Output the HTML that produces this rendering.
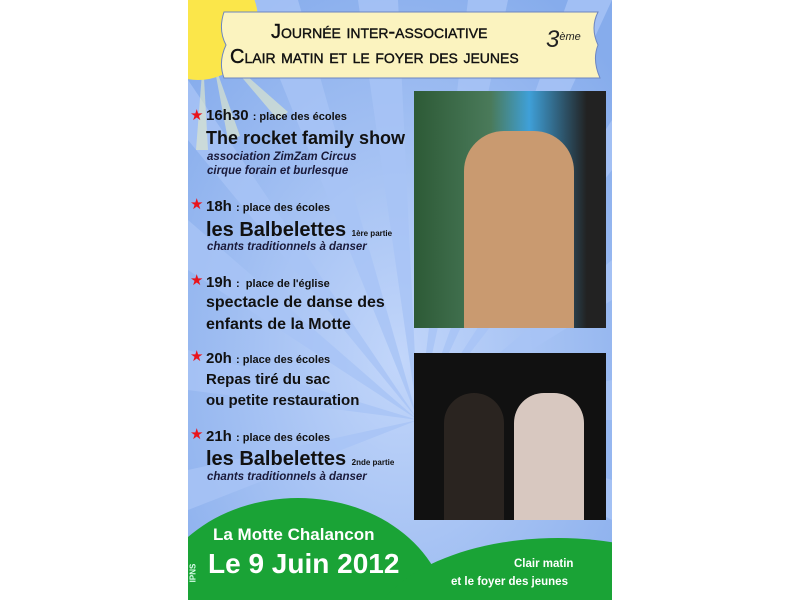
<!DOCTYPE html>
<html><head><meta charset="utf-8"><style>
body{margin:0;width:800px;height:600px;background:#fff;position:relative;overflow:hidden;font-family:"Liberation Sans",sans-serif}
#p{position:absolute;left:188px;top:0;width:424px;height:600px;overflow:hidden;background:#8db2ee}
.t{position:absolute;color:#111;font-weight:bold;white-space:nowrap}
.s{font-size:11px}
.i{font-style:italic;font-size:11.5px;color:#1a1a3a}
.star{position:absolute;color:#e8141c;font-size:15px;left:2px;line-height:18px}
.w{position:absolute;color:#fff;font-weight:bold;white-space:nowrap}
.h{position:absolute;color:#111;white-space:nowrap;font-variant:small-caps;font-size:20px;line-height:22px;-webkit-text-stroke:0.4px #111}
</style></head><body>
<div id="p">
<svg width="424" height="600" style="position:absolute;left:0;top:0">
<defs><radialGradient id="g" cx="0.5" cy="0.6" r="0.7"><stop offset="0" stop-color="#c2d6fa"/><stop offset="1" stop-color="#86acec"/></radialGradient></defs>
<rect width="424" height="600" fill="url(#g)"/>
<g fill="#a8c4f6" opacity="0.8">
<polygon points="230,420 0,80 0,140"/><polygon points="230,420 0,220 0,270"/><polygon points="230,420 0,350 0,390"/><polygon points="230,420 0,470 0,510"/>
<polygon points="230,420 60,0 110,0"/><polygon points="230,420 170,0 210,0"/><polygon points="230,420 280,0 320,0"/><polygon points="230,420 380,0 424,0"/>
<polygon points="230,420 424,120 424,170"/><polygon points="230,420 424,260 424,300"/><polygon points="230,420 424,380 424,420"/><polygon points="230,420 424,480 424,520"/>
</g>
<g fill="#e6ecc8" opacity="0.6"><polygon points="15,60 8,150 20,150"/><polygon points="25,60 40,140 52,136"/><polygon points="35,55 90,120 100,112"/></g>
<circle cx="10" cy="20" r="60" fill="#fbe64a"/>
<path d="M36,12 Q30,30 38,45 Q30,62 36,78 L412,78 Q404,60 410,45 Q402,28 410,12 Z" fill="#fbf3bf" stroke="#6d86c0" stroke-width="1"/>
<ellipse cx="110" cy="620" rx="150" ry="122" fill="#1aa336"/>
<ellipse cx="370" cy="640" rx="190" ry="102" fill="#1aa336"/>
</svg>
<div class="h" style="left:83px;top:21px">Journée inter-associative</div>
<div class="h" style="left:42px;top:46px">Clair matin et le foyer des jeunes</div>
<div class="t" style="left:358px;top:26px;font-size:24px;font-style:italic;font-weight:normal;color:#222">3<span style="font-size:11px;position:relative;top:-7px">ème</span></div>
<div style="position:absolute;left:226px;top:91px;width:192px;height:237px;background:linear-gradient(90deg,#2d5a36 0,#4a7a5a 40%,#3fa0d8 60%,#222 90%)"><div style="position:absolute;left:50px;top:40px;width:110px;height:197px;background:#c99a70;border-radius:40px 40px 0 0"></div></div>
<div style="position:absolute;left:226px;top:353px;width:192px;height:167px;background:#111"><div style="position:absolute;left:30px;top:40px;width:60px;height:127px;background:#2a2420;border-radius:30px 30px 0 0"></div><div style="position:absolute;left:100px;top:40px;width:70px;height:127px;background:#d8c8c0;border-radius:30px 30px 0 0"></div></div>
<span class="star" style="top:107px">★</span>
<div class="t" style="left:18px;top:107px;font-size:15px">16h30 <span class="s">: place des écoles</span></div>
<div class="t" style="left:18px;top:128px;font-size:18px">The rocket family show</div>
<div class="t i" style="left:19px;top:151px">association ZimZam Circus</div>
<div class="t i" style="left:19px;top:165px">cirque forain et burlesque</div>
<span class="star" style="top:196px">★</span>
<div class="t" style="left:18px;top:198px;font-size:15px">18h <span class="s">: place des écoles</span></div>
<div class="t" style="left:18px;top:219px;font-size:20px">les Balbelettes <span style="font-size:8px">1ère partie</span></div>
<div class="t i" style="left:19px;top:241px">chants traditionnels à danser</div>
<span class="star" style="top:272px">★</span>
<div class="t" style="left:18px;top:274px;font-size:15px">19h <span class="s">:&nbsp; place de l'église</span></div>
<div class="t" style="left:18px;top:294px;font-size:16px">spectacle de danse des</div>
<div class="t" style="left:18px;top:316px;font-size:16px">enfants de la Motte</div>
<span class="star" style="top:348px">★</span>
<div class="t" style="left:18px;top:350px;font-size:15px">20h <span class="s">: place des écoles</span></div>
<div class="t" style="left:18px;top:371px;font-size:15px">Repas tiré du sac</div>
<div class="t" style="left:18px;top:392px;font-size:15px">ou petite restauration</div>
<span class="star" style="top:426px">★</span>
<div class="t" style="left:18px;top:428px;font-size:15px">21h <span class="s">: place des écoles</span></div>
<div class="t" style="left:18px;top:448px;font-size:20px">les Balbelettes <span style="font-size:8px">2nde partie</span></div>
<div class="t i" style="left:19px;top:471px">chants traditionnels à danser</div>
<div class="w" style="left:25px;top:525px;font-size:17px">La Motte Chalancon</div>
<div class="w" style="left:20px;top:548px;font-size:28px">Le 9 Juin 2012</div>
<div class="w" style="left:326px;top:558px;font-size:11.5px">Clair matin</div>
<div class="w" style="left:263px;top:576px;font-size:11.5px">et le foyer des jeunes</div>
<div class="w" style="left:-4px;top:568px;font-size:8px;line-height:10px;transform:rotate(-90deg);color:#dfe">IPNS</div>
</div>
</body></html>
